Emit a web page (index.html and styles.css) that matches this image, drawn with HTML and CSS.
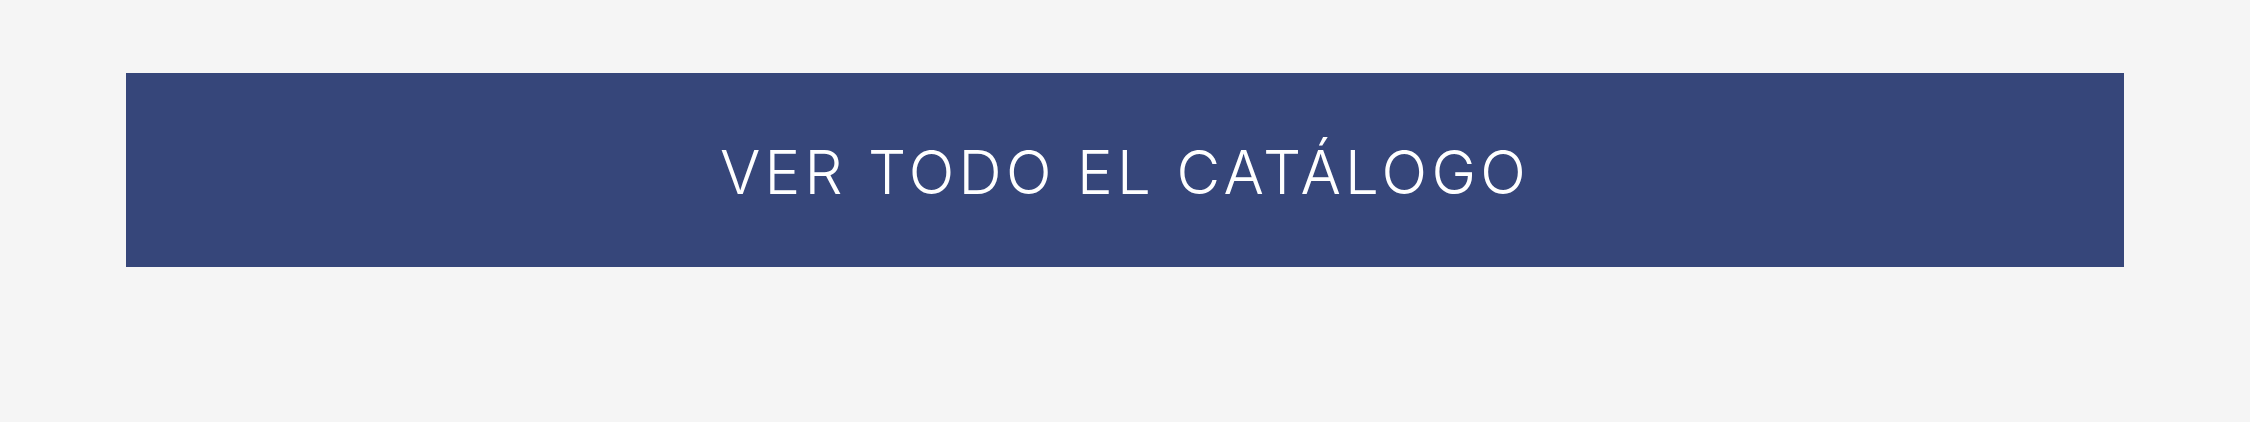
FILE: index.html
```html
<!DOCTYPE html>
<html lang="es">
<head>
    <meta charset="UTF-8">
    <meta name="viewport" content="width=device-width, initial-scale=1.0">
    <title>Catálogo</title>
    <link rel="stylesheet" href="styles.css">
</head>
<body>
    <div class="catalog-cta">
        <a href="#" class="catalog-btn">VER TODO EL CATÁLOGO</a>
    </div>
</body>
</html>
```
FILE: styles.css
```css
body {
    margin: 0;
    background-color: #f5f5f5;
    font-family: Inter, "Open Sans", sans-serif;
}

.catalog-cta {
    padding: 73px 126px 155px;
}

.catalog-btn {
    display: flex;
    align-items: center;
    justify-content: center;
    height: 194px;
    background: #36467a;
    color: #ffffff;
    text-decoration: none;
    font-size: 60px;
    font-weight: 300;
    letter-spacing: 4.3px;
    padding-top: 4px;
    box-sizing: border-box;
}
```
